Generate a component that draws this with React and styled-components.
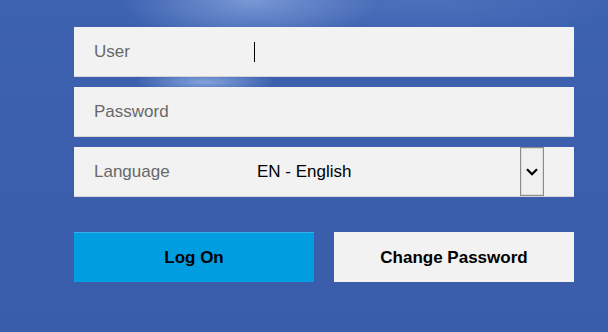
import React from "react";
import styled, { createGlobalStyle } from "styled-components";

const Global = createGlobalStyle`
  html, body { margin: 0; padding: 0; }
  body {
    width: 608px;
    height: 332px;
    overflow: hidden;
    font-family: "Liberation Sans", Arial, sans-serif;
    background-color: #3a5daf;
    background-image:
      radial-gradient(ellipse 130px 45px at 250px 0px, rgba(140,170,225,0.75), rgba(140,170,225,0) 100%),
      radial-gradient(ellipse 70px 12px at 205px 82px, rgba(150,180,230,0.8), rgba(150,180,230,0) 100%),
      radial-gradient(ellipse 200px 40px at 420px 0px, rgba(110,140,210,0.35), rgba(110,140,210,0) 100%),
      linear-gradient(180deg, #3d62b0 0%, #395cab 100%);
  }
`;

const Form = styled.div`
  width: 500px;
  margin-left: 74px;
  padding-top: 27px;
  display: flex;
  flex-direction: column;
  gap: 10px;
`;

const Field = styled.div`
  box-sizing: border-box;
  height: 50px;
  background: #f2f2f2;
  border-bottom: 1px solid #d6d6d6;
  display: flex;
  align-items: center;
  padding-left: 20px;
`;

const Label = styled.span`
  width: 160px;
  font-size: 17px;
  color: #686868;
`;

const Value = styled.span`
  flex: 1;
  font-size: 17px;
  color: #000;
  padding-left: ${(p) => p.$indent || 0}px;
`;

const Caret = styled.span`
  display: block;
  width: 1px;
  height: 20px;
  background: #000;
`;

const DropButton = styled.div`
  box-sizing: border-box;
  align-self: stretch;
  width: 24px;
  margin-right: 30px;
  border: 1px solid #8c8c8c;
  box-shadow: inset 0 0 0 1px #dcdcdc;
  background: #f0f0f0;
  display: flex;
  align-items: center;
  justify-content: center;
`;

const Buttons = styled.div`
  display: flex;
  gap: 20px;
  margin-top: 25px;
`;

const Button = styled.div`
  box-sizing: border-box;
  width: 240px;
  height: 50px;
  display: flex;
  align-items: center;
  justify-content: center;
  font-size: 17px;
  font-weight: bold;
  color: #000;
  background: ${(p) => (p.$primary ? "#009de0" : "#f2f2f2")};
  border-top: 1px solid ${(p) => (p.$primary ? "#35b0e8" : "#f2f2f2")};
`;

export default function App() {
  return (
    <>
      <Global />
      <Form>
        <Field>
          <Label>User</Label>
          <Caret />
        </Field>
        <Field>
          <Label>Password</Label>
        </Field>
        <Field>
          <Label>Language</Label>
          <Value $indent={3}>EN - English</Value>
          <DropButton>
            <svg width="12" height="8" viewBox="0 0 12 8">
              <path d="M1 1.2 L6 6.2 L11 1.2" fill="none" stroke="#000" strokeWidth="2.2" />
            </svg>
          </DropButton>
        </Field>
        <Buttons>
          <Button $primary>Log On</Button>
          <Button>Change Password</Button>
        </Buttons>
      </Form>
    </>
  );
}
